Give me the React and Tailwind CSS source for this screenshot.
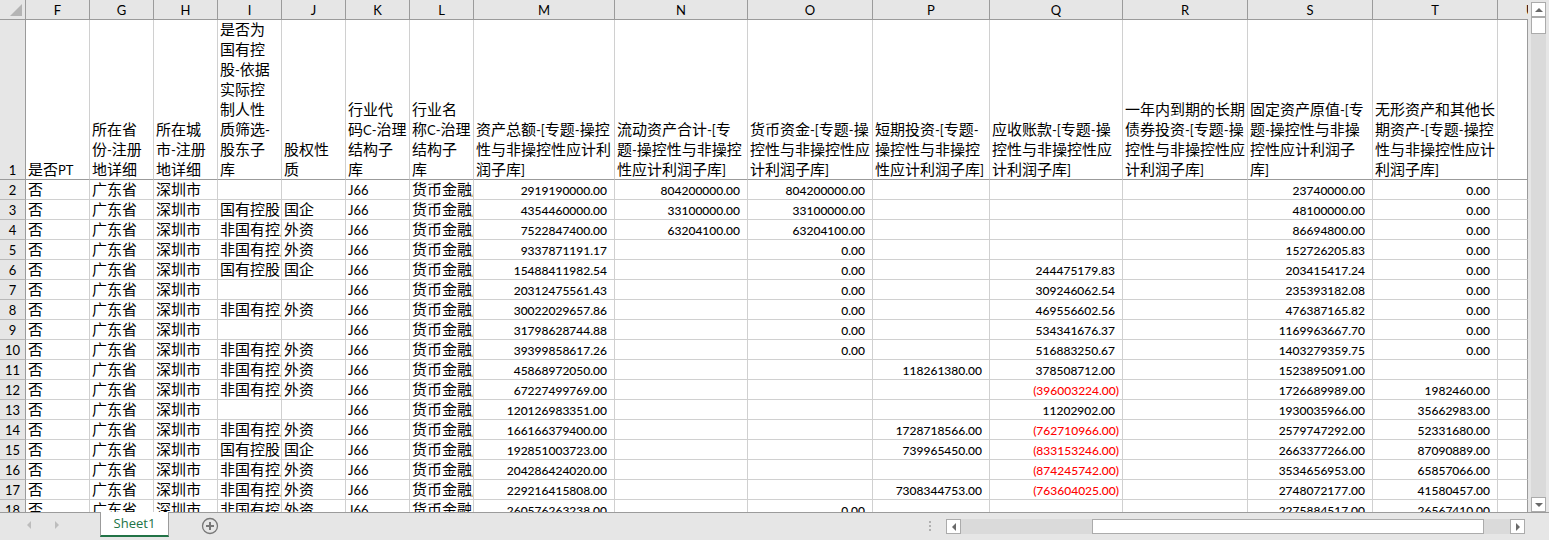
import React from "react";

const columns = [
  { key: "F", width: "w-16", title: "是否PT" },
  { key: "G", width: "w-16", title: "所在省\n份-注册\n地详细" },
  { key: "H", width: "w-16", title: "所在城\n市-注册\n地详细" },
  {
    key: "I",
    width: "w-16",
    title: "是否为\n国有控\n股-依据\n实际控\n制人性\n质筛选-\n股东子\n库",
  },
  { key: "J", width: "w-16", title: "股权性\n质" },
  { key: "K", width: "w-16", title: "行业代\n码C-治理\n结构子\n库" },
  { key: "L", width: "w-16", title: "行业名\n称C-治理\n结构子\n库" },
  {
    key: "M",
    width: "w-[141px]",
    numeric: true,
    title: "资产总额-[专题-操控\n性与非操控性应计利\n润子库]",
  },
  {
    key: "N",
    width: "w-[133px]",
    numeric: true,
    title: "流动资产合计-[专\n题-操控性与非操控\n性应计利润子库]",
  },
  {
    key: "O",
    width: "w-[125px]",
    numeric: true,
    title: "货币资金-[专题-操\n控性与非操控性应\n计利润子库]",
  },
  {
    key: "P",
    width: "w-[117px]",
    numeric: true,
    title: "短期投资-[专题-\n操控性与非操控\n性应计利润子库]",
  },
  {
    key: "Q",
    width: "w-[133px]",
    numeric: true,
    title: "应收账款-[专题-操\n控性与非操控性应\n计利润子库]",
  },
  {
    key: "R",
    width: "w-[125px]",
    numeric: true,
    title: "一年内到期的长期\n债券投资-[专题-操\n控性与非操控性应\n计利润子库]",
  },
  {
    key: "S",
    width: "w-[125px]",
    numeric: true,
    title: "固定资产原值-[专\n题-操控性与非操\n控性应计利润子\n库]",
  },
  {
    key: "T",
    width: "w-[125px]",
    numeric: true,
    title: "无形资产和其他长\n期资产-[专题-操控\n性与非操控性应计\n利润子库]",
  },
];

const STATE = ["国有控股", "国企"];
const FOREIGN = ["非国有控股", "外资"];
const NONE = ["", ""];

// holding type, then M, N, O, P, Q, S, T
const records = [
  [NONE, "2919190000.00", "804200000.00", "804200000.00", "", "", "23740000.00", "0.00"],
  [STATE, "4354460000.00", "33100000.00", "33100000.00", "", "", "48100000.00", "0.00"],
  [FOREIGN, "7522847400.00", "63204100.00", "63204100.00", "", "", "86694800.00", "0.00"],
  [FOREIGN, "9337871191.17", "", "0.00", "", "", "152726205.83", "0.00"],
  [STATE, "15488411982.54", "", "0.00", "", "244475179.83", "203415417.24", "0.00"],
  [NONE, "20312475561.43", "", "0.00", "", "309246062.54", "235393182.08", "0.00"],
  [FOREIGN, "30022029657.86", "", "0.00", "", "469556602.56", "476387165.82", "0.00"],
  [NONE, "31798628744.88", "", "0.00", "", "534341676.37", "1169963667.70", "0.00"],
  [FOREIGN, "39399858617.26", "", "0.00", "", "516883250.67", "1403279359.75", "0.00"],
  [FOREIGN, "45868972050.00", "", "", "118261380.00", "378508712.00", "1523895091.00", ""],
  [FOREIGN, "67227499769.00", "", "", "", "(396003224.00)", "1726689989.00", "1982460.00"],
  [NONE, "120126983351.00", "", "", "", "11202902.00", "1930035966.00", "35662983.00"],
  [FOREIGN, "166166379400.00", "", "", "1728718566.00", "(762710966.00)", "2579747292.00", "52331680.00"],
  [STATE, "192851003723.00", "", "", "739965450.00", "(833153246.00)", "2663377266.00", "87090889.00"],
  [FOREIGN, "204286424020.00", "", "", "", "(874245742.00)", "3534656953.00", "65857066.00"],
  [FOREIGN, "229216415808.00", "", "", "7308344753.00", "(763604025.00)", "2748072177.00", "41580457.00"],
  [FOREIGN, "260576263238.00", "", "0.00", "", "", "2275884517.00", "26567410.00"],
];

const rows = records.map(([[I, J], M, N, O, P, Q, S, T]) => ({
  F: "否",
  G: "广东省",
  H: "深圳市",
  I,
  J,
  K: "J66",
  L: "货币金融服务",
  M,
  N,
  O,
  P,
  Q,
  R: "",
  S,
  T,
}));

// Latin runs are set smaller than the Chinese text around them
const MixedText = ({ text }) =>
  text.split(/([\x21-\x7e]+)/).map((part, i) =>
    i % 2 ? (
      <span key={i} className="text-[13px]">
        {part}
      </span>
    ) : (
      part
    )
  );

const Arrow = ({ d, className }) => (
  <svg viewBox="0 0 8 8" className={`size-2 ${className}`} fill="currentColor">
    <path d={d} />
  </svg>
);

const ARROWS = {
  up: "M0 6h8L4 2z",
  down: "M0 2h8L4 6z",
  left: "M6 0v8L2 4z",
  right: "M2 0v8L6 4z",
};

const ScrollButton = ({ direction }) => (
  <button
    aria-label={`Scroll ${direction}`}
    className="flex size-[15px] shrink-0 items-center justify-center border border-[#ababab] bg-white"
  >
    <Arrow d={ARROWS[direction]} className="text-[#6a6a6a]" />
  </button>
);

const NumberCell = ({ value }) => {
  const negative = value.startsWith("(");
  return (
    <td
      className={`h-5 overflow-hidden border-r border-b border-[#d0d0d0] pt-0.5 text-right text-[12px] leading-[17px] font-medium ${
        negative ? "pr-[3px] text-[#ff0000]" : "pr-[7px]"
      }`}
    >
      {value}
    </td>
  );
};

const RowHeader = ({ children, className }) => (
  <th
    scope="row"
    className={`border-r border-b border-r-[#9b9b9b] bg-[#e6e6e6] pt-0.5 text-center text-[13px] leading-[17px] font-normal ${className}`}
  >
    {children}
  </th>
);

const Sheet = () => (
  <table className="w-full min-w-[1528px] table-fixed border-separate border-spacing-0">
    <colgroup>
      <col className="w-[26px]" />
      {columns.map((c) => (
        <col key={c.key} className={c.width} />
      ))}
      <col />
    </colgroup>
    <thead>
      <tr>
        <th className="h-5 border-r border-b border-[#9b9b9b] bg-[#e6e6e6]">
          <svg viewBox="0 0 12 12" className="ml-2.5 size-3">
            <path d="M12 0v12H0z" fill="#b4b4b4" />
          </svg>
        </th>
        {columns.map((c) => (
          <th
            key={c.key}
            scope="col"
            className="h-5 border-r border-b border-[#9b9b9b] bg-[#e6e6e6] pt-0.5 text-[13px] leading-[17px] font-normal"
          >
            {c.key}
          </th>
        ))}
        <th
          scope="col"
          className="h-5 overflow-hidden border-b border-[#9b9b9b] bg-[#e6e6e6] pt-0.5 pl-7 text-left text-[13px] leading-[17px] font-normal"
        >
          U
        </th>
      </tr>
    </thead>
    <tbody>
      <tr>
        <RowHeader className="h-40 border-b-[#9b9b9b] align-bottom">1</RowHeader>
        {columns.map((c) => (
          <td
            key={c.key}
            className="h-40 border-r border-b border-r-[#d0d0d0] border-b-[#9b9b9b] pl-0.5 align-bottom text-[15px] whitespace-pre"
          >
            <div className="flex h-[159px] flex-col justify-end">
              {c.title.split("\n").map((line) => (
                <div key={line} className="h-5 leading-5">
                  <MixedText text={line} />
                </div>
              ))}
            </div>
          </td>
        ))}
        <td className="border-r border-b border-[#9b9b9b]" />
      </tr>
      {rows.map((row, i) => (
        <tr key={i}>
          <RowHeader className="h-5 border-b-[#b8b8b8]">{i + 2}</RowHeader>
          {columns.map((c) =>
            c.numeric ? (
              <NumberCell key={c.key} value={row[c.key]} />
            ) : (
              <td
                key={c.key}
                className="h-5 overflow-hidden border-r border-b border-[#d0d0d0] pl-0.5 text-[15px] leading-[19px] whitespace-nowrap"
              >
                <div className="h-[19px] overflow-hidden">
                  <MixedText text={row[c.key]} />
                </div>
              </td>
            )
          )}
          <td className="border-r border-b border-r-[#9b9b9b] border-b-[#d0d0d0]" />
        </tr>
      ))}
    </tbody>
  </table>
);

const VerticalScrollbar = () => (
  <div className="mx-[3px] mt-0.5 flex w-[15px] shrink-0 flex-col bg-[#dadada]">
    <ScrollButton direction="up" />
    <div className="h-[17px] border border-[#ababab] bg-white" />
    <div className="flex-1" />
    <ScrollButton direction="down" />
  </div>
);

const HorizontalScrollbar = () => (
  <div className="mt-1.5 mr-6 flex h-[15px] w-[579px] shrink-0 bg-[#dadada]">
    <ScrollButton direction="left" />
    <div className="w-[131px]" />
    <div className="w-[392px] border border-[#ababab] bg-white" />
    <div className="flex-1" />
    <ScrollButton direction="right" />
  </div>
);

const SheetBar = () => (
  <footer className="flex h-7 shrink-0 items-start">
    <div className="flex w-[100px] shrink-0 gap-5 border-t border-[#9b9b9b] pt-2 pl-[25px] text-[#bdbdbd]">
      <button aria-label="Previous sheet" className="flex size-2">
        <Arrow d={ARROWS.left} className="" />
      </button>
      <button aria-label="Next sheet" className="flex size-2">
        <Arrow d={ARROWS.right} className="" />
      </button>
    </div>
    <button className="h-[25px] w-[69px] shrink-0 border-x border-b-2 border-x-[#9b9b9b] border-b-[#217346] bg-white font-['Open_Sans',sans-serif] text-[13px] leading-[23px] text-[#217346]">
      Sheet1
    </button>
    <div className="flex min-w-0 flex-1 border-t border-[#9b9b9b]">
      <button aria-label="New sheet" className="mt-1 ml-8 size-[18px]">
        <svg viewBox="0 0 18 18" fill="none" stroke="#777777">
          <circle cx="9" cy="9" r="7.5" strokeWidth="1.3" />
          <path d="M9 5v8M5 9h8" strokeWidth="2" />
        </svg>
      </button>
      <div className="flex-1" />
      <div className="mt-2 mr-[15px] flex flex-col gap-0.5">
        <span className="size-0.5 bg-[#b0b0b0]" />
        <span className="size-0.5 bg-[#b0b0b0]" />
        <span className="size-0.5 bg-[#b0b0b0]" />
      </div>
      <HorizontalScrollbar />
    </div>
  </footer>
);

const App = () => (
  <div className="flex h-screen flex-col overflow-hidden bg-[#e6e6e6] font-['Lato','Noto_Sans_CJK_SC',sans-serif] text-black">
    <main className="flex min-h-0 flex-1">
      <div className="min-w-0 flex-1 overflow-hidden bg-white">
        <Sheet />
      </div>
      <VerticalScrollbar />
    </main>
    <SheetBar />
  </div>
);

export default App;
